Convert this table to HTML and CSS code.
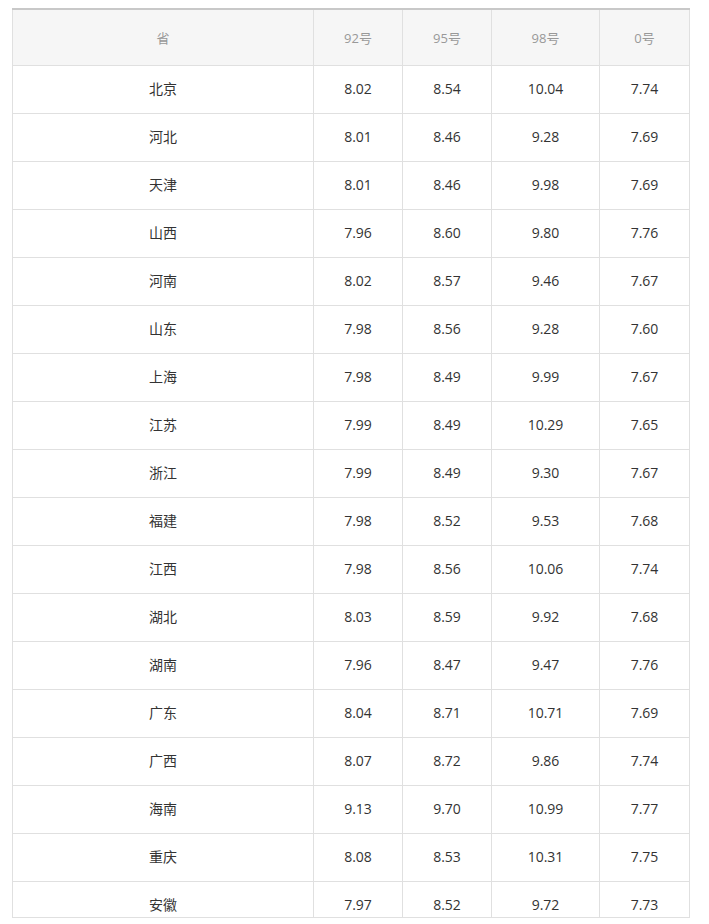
FILE: index.html
```html
<!DOCTYPE html>
<html lang="zh">
<head>
<meta charset="utf-8">
<title>油价表</title>
<link rel="stylesheet" href="styles.css">
</head>
<body>
<div class="clip">
<table class="price">
<colgroup>
<col class="c-prov"><col class="c-n"><col class="c-n"><col class="c-w"><col class="c-n2">
</colgroup>
<thead>
<tr><th>省</th><th>92号</th><th>95号</th><th>98号</th><th>0号</th></tr>
</thead>
<tbody>
<tr><td>北京</td><td>8.02</td><td>8.54</td><td>10.04</td><td>7.74</td></tr>
<tr><td>河北</td><td>8.01</td><td>8.46</td><td>9.28</td><td>7.69</td></tr>
<tr><td>天津</td><td>8.01</td><td>8.46</td><td>9.98</td><td>7.69</td></tr>
<tr><td>山西</td><td>7.96</td><td>8.60</td><td>9.80</td><td>7.76</td></tr>
<tr><td>河南</td><td>8.02</td><td>8.57</td><td>9.46</td><td>7.67</td></tr>
<tr><td>山东</td><td>7.98</td><td>8.56</td><td>9.28</td><td>7.60</td></tr>
<tr><td>上海</td><td>7.98</td><td>8.49</td><td>9.99</td><td>7.67</td></tr>
<tr><td>江苏</td><td>7.99</td><td>8.49</td><td>10.29</td><td>7.65</td></tr>
<tr><td>浙江</td><td>7.99</td><td>8.49</td><td>9.30</td><td>7.67</td></tr>
<tr><td>福建</td><td>7.98</td><td>8.52</td><td>9.53</td><td>7.68</td></tr>
<tr><td>江西</td><td>7.98</td><td>8.56</td><td>10.06</td><td>7.74</td></tr>
<tr><td>湖北</td><td>8.03</td><td>8.59</td><td>9.92</td><td>7.68</td></tr>
<tr><td>湖南</td><td>7.96</td><td>8.47</td><td>9.47</td><td>7.76</td></tr>
<tr><td>广东</td><td>8.04</td><td>8.71</td><td>10.71</td><td>7.69</td></tr>
<tr><td>广西</td><td>8.07</td><td>8.72</td><td>9.86</td><td>7.74</td></tr>
<tr><td>海南</td><td>9.13</td><td>9.70</td><td>10.99</td><td>7.77</td></tr>
<tr><td>重庆</td><td>8.08</td><td>8.53</td><td>10.31</td><td>7.75</td></tr>
<tr><td>安徽</td><td>7.97</td><td>8.52</td><td>9.72</td><td>7.73</td></tr>
</tbody>
</table>
</div>
</body>
</html>
```
FILE: styles.css
```css
html, body {
  margin: 0;
  padding: 0;
  background: #fff;
}
body {
  padding: 8px 0 0 12px;
  font-family: "Open Sans", "Noto Sans CJK SC", sans-serif;
  color: #333;
}
.clip {
  width: 678px;
  height: 909px;
  overflow: hidden;
  border-bottom: 1px solid #e0e0e0;
}
.price {
  width: 677px;
  border-collapse: collapse;
  table-layout: fixed;
  border-top: 2px solid #c8c8c8;
}
.c-prov { width: 301px; }
.c-n { width: 89px; }
.c-w { width: 108px; }
.c-n2 { width: 90px; }
.price th,
.price td {
  border: 1px solid #e0e0e0;
  text-align: center;
  padding: 0;
}
.price thead tr:first-child th {
  border-top: 2px solid #c8c8c8;
}
.price th {
  height: 54px;
  padding-bottom: 1px;
  background: #f6f6f6;
  color: #999;
  font-size: 13px;
  font-weight: normal;
}
.price td {
  height: 44px;
  padding-bottom: 3px;
  font-size: 14px;
  color: #333;
}
```
